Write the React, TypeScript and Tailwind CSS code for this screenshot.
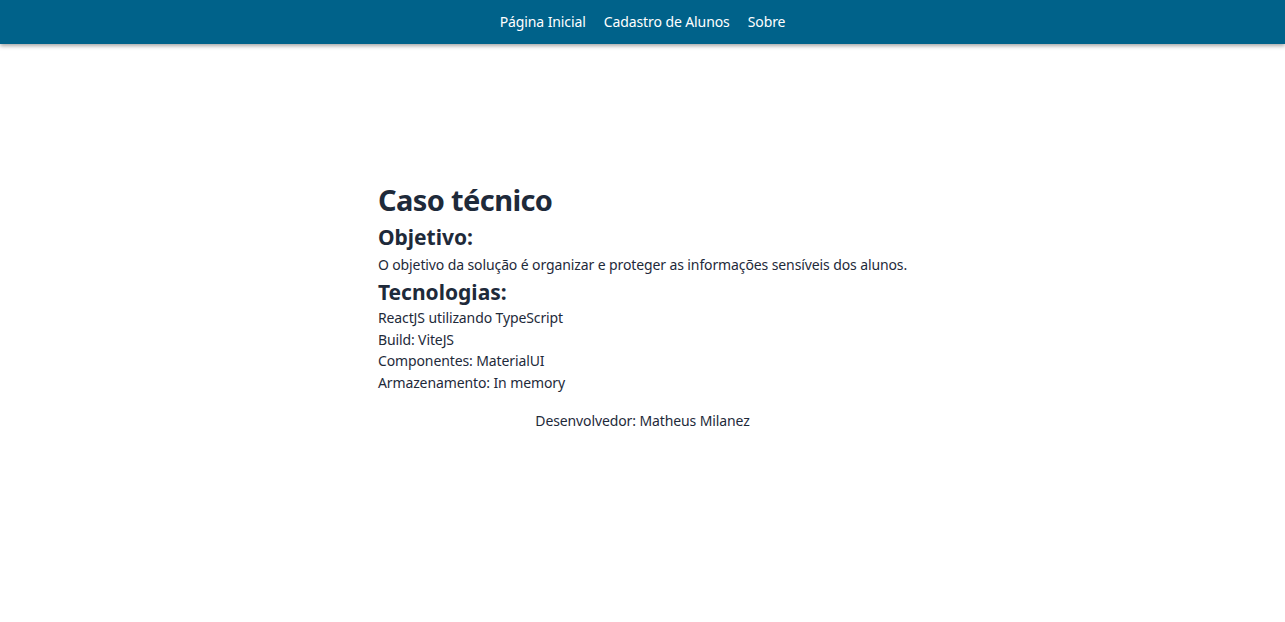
import React from "react";

export default function App() {
  return (
    <div className="min-h-[622px] bg-white text-[#1e2a3a]" style={{ fontFamily: '"Noto Sans", "Open Sans", sans-serif' }}>
      <header className="h-[44px] pb-[2px] bg-[#00628a] shadow-[0_2px_4px_rgba(0,0,0,0.35)] flex items-center justify-center gap-[18px] text-white text-[14px] tracking-[-0.1px]">
        <a>Página Inicial</a>
        <a>Cadastro de Alunos</a>
        <a>Sobre</a>
      </header>
      <main className="flex justify-center pt-[138px]">
        <div className="flex flex-col">
          <h1 className="text-[29px] font-bold leading-[36px] tracking-[-0.6px]">Caso técnico</h1>
          <h2 className="text-[21px] font-bold leading-[28px] mt-[5px]">Objetivo:</h2>
          <p className="text-[14px] leading-[21px] mt-[3px] tracking-[-0.11px]">O objetivo da solução é organizar e proteger as informações sensíveis dos alunos.</p>
          <h2 className="text-[21px] font-bold leading-[28px] mt-[3px]">Tecnologias:</h2>
          <p className="text-[14px] leading-[21.5px] mt-[1px] tracking-[-0.11px]">ReactJS utilizando TypeScript</p>
          <p className="text-[14px] leading-[21.5px] tracking-[-0.11px]">Build: ViteJS</p>
          <p className="text-[14px] leading-[21.5px] tracking-[-0.11px]">Componentes: MaterialUI</p>
          <p className="text-[14px] leading-[21.5px] tracking-[-0.11px]">Armazenamento: In memory</p>
          <p className="text-[14px] leading-[21px] text-center mt-[17px] tracking-[-0.11px]">Desenvolvedor: Matheus Milanez</p>
        </div>
      </main>
    </div>
  );
}
